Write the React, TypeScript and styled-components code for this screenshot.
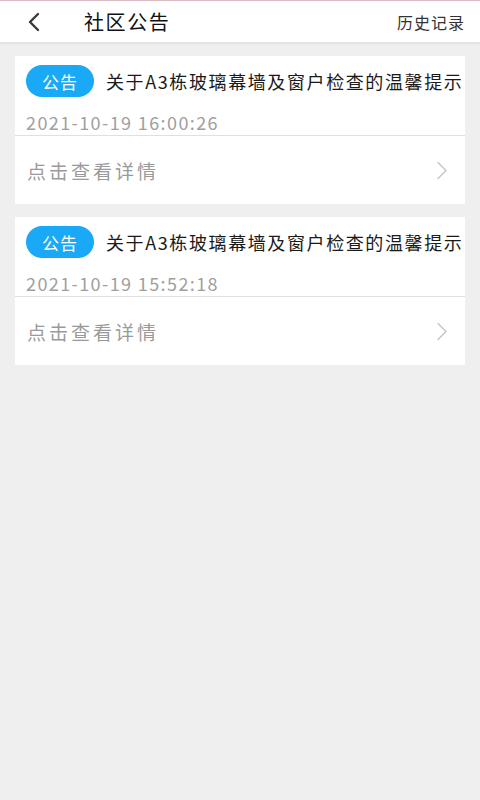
import React from 'react';
import styled, { createGlobalStyle } from 'styled-components';

const GlobalStyle = createGlobalStyle`
  html, body {
    margin: 0;
    padding: 0;
    background: #efefef;
    font-family: "Noto Sans CJK SC", "Noto Sans", Roboto, sans-serif;
  }
  #root {
    min-height: 800px;
    background: #efefef;
  }
`;

const Page = styled.div`
  min-height: 800px;
  display: flex;
  flex-direction: column;
  border-top: 1px solid #dcbcc4;
  box-sizing: border-box;
`;

const Header = styled.header`
  height: 41px;
  background: #fff;
  display: flex;
  align-items: center;
  padding: 0 15px 0 22px;
  border-bottom: 1px solid #e2e2e2;
  box-shadow: 0 1px 2px rgba(0, 0, 0, 0.06);
`;

const BackButton = styled.button`
  border: none;
  background: none;
  padding: 0;
  width: 24px;
  height: 24px;
  display: flex;
  align-items: center;
  justify-content: center;
  cursor: pointer;
`;

const Title = styled.h1`
  margin: 0 0 0 38px;
  font-size: 20px;
  font-weight: 400;
  letter-spacing: 1.6px;
  color: #111;
  flex: 1;
`;

const HeaderAction = styled.span`
  font-size: 16px;
  letter-spacing: 1px;
  color: #333;
`;

const List = styled.main`
  display: flex;
  flex-direction: column;
  gap: 13px;
  padding: 13px 15px;
`;

const Card = styled.section`
  background: #fff;
  display: flex;
  flex-direction: column;
`;

const CardTop = styled.div`
  padding: 9px 0 0 11px;
  display: flex;
  flex-direction: column;
`;

const TitleRow = styled.div`
  display: flex;
  align-items: center;
  gap: 12px;
  min-width: 0;
`;

const Badge = styled.span`
  flex: none;
  width: 68px;
  height: 32px;
  border-radius: 16px;
  background: #1aa9f6;
  color: #fff;
  font-size: 17px;
  letter-spacing: 1px;
  display: flex;
  align-items: center;
  justify-content: center;
`;

const NoticeTitle = styled.span`
  font-size: 18px;
  letter-spacing: 1.6px;
  color: #1a1a1a;
  white-space: nowrap;
  overflow: hidden;
`;

const Date = styled.div`
  margin-top: 13px;
  height: 25px;
  line-height: 24px;
  font-size: 18px;
  letter-spacing: 1.4px;
  color: #a0a0a0;
`;

const DetailRow = styled.div`
  height: 68px;
  border-top: 1px solid #e0e0e0;
  display: flex;
  align-items: center;
  justify-content: space-between;
  padding: 0 17px 0 12px;
`;

const DetailText = styled.span`
  font-size: 19px;
  letter-spacing: 3px;
  color: #9a9a9a;
`;

const notices = [
  { id: 1, title: '关于A3栋玻璃幕墙及窗户检查的温馨提示', time: '2021-10-19 16:00:26' },
  { id: 2, title: '关于A3栋玻璃幕墙及窗户检查的温馨提示', time: '2021-10-19 15:52:18' },
];

const ChevronLeft = () => (
  <svg width="16" height="20" viewBox="0 0 16 20" fill="none">
    <path d="M12 2 L4 10 L12 18" stroke="#3a3a3a" strokeWidth="2.4" strokeLinecap="round" strokeLinejoin="round" />
  </svg>
);

const ChevronRight = () => (
  <svg width="12" height="19" viewBox="0 0 12 19" fill="none">
    <path d="M2 1.5 L10 9.5 L2 17.5" stroke="#c6c6c6" strokeWidth="1.5" strokeLinecap="round" strokeLinejoin="round" />
  </svg>
);

export default function App() {
  return (
    <>
      <GlobalStyle />
      <Page>
        <Header>
          <BackButton aria-label="返回">
            <ChevronLeft />
          </BackButton>
          <Title>社区公告</Title>
          <HeaderAction>历史记录</HeaderAction>
        </Header>

        <List>
          {notices.map((n) => (
            <Card key={n.id}>
              <CardTop>
                <TitleRow>
                  <Badge>公告</Badge>
                  <NoticeTitle>{n.title}</NoticeTitle>
                </TitleRow>
                <Date>{n.time}</Date>
              </CardTop>
              <DetailRow>
                <DetailText>点击查看详情</DetailText>
                <ChevronRight />
              </DetailRow>
            </Card>
          ))}
        </List>
      </Page>
    </>
  );
}
